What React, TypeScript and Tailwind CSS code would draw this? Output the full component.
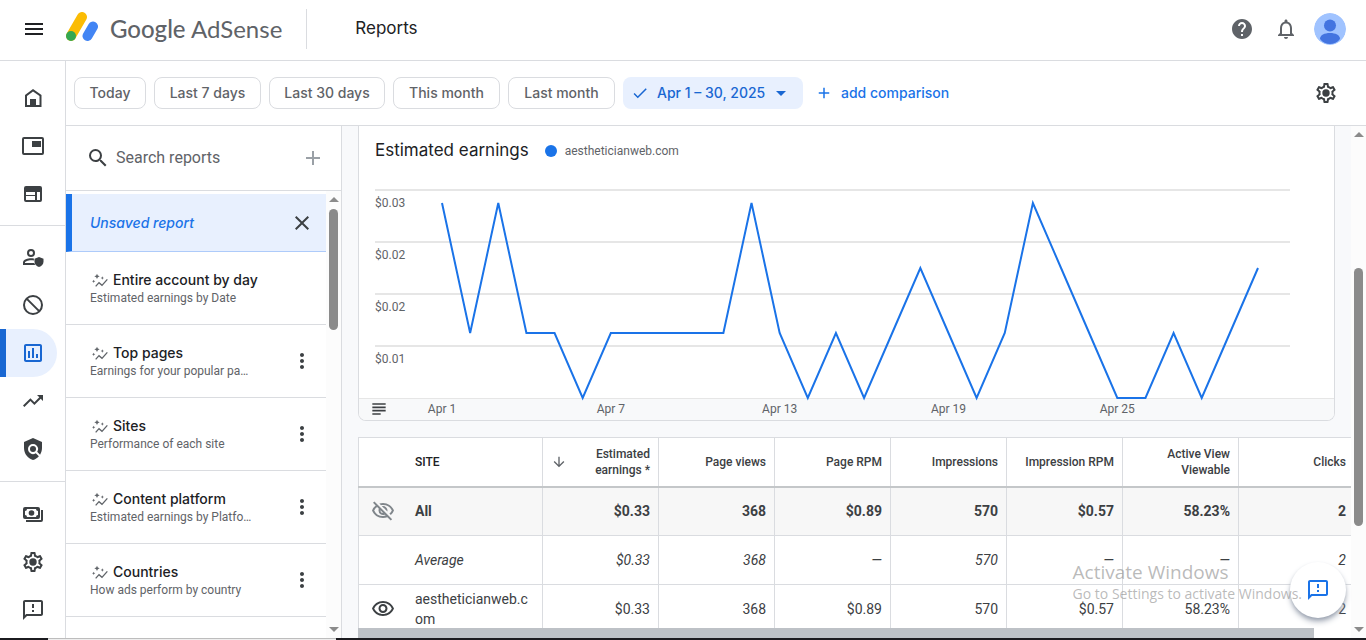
import React from 'react';
import {
  MdAdd,
  MdArrowDownward,
  MdArrowDropDown,
  MdCheck,
  MdClose,
  MdHelp,
  MdMenu,
  MdMoreVert,
  MdNotificationsNone,
  MdOutlineFeedback,
  MdOutlineInsertChart,
  MdOutlineVisibility,
  MdOutlineVisibilityOff,
  MdPolicy,
  MdSearch,
  MdSubject,
  MdTrendingUp,
} from 'react-icons/md';

const HomeIcon = () => (
  <svg viewBox="0 0 24 24" className="size-6" fill="currentColor">
    <path fillRule="evenodd" d="M4 21V9l8-6 8.5 6v12H4Zm2-2h12.5v-9L12 5.5 6 10v9Z" />
    <path d="M9 13h6v7H9z" />
  </svg>
);

const AdsIcon = () => (
  <svg viewBox="0 0 24 24" className="size-6" fill="currentColor">
    <path fillRule="evenodd" d="M3 3h18a2 2 0 0 1 2 2v14a2 2 0 0 1-2 2H3a2 2 0 0 1-2-2V5a2 2 0 0 1 2-2Zm0 2v14h18V5H3Z" />
    <path d="M11 7h9v6h-9z" />
  </svg>
);

const SitesIcon = () => (
  <svg viewBox="0 0 24 24" className="size-6" fill="currentColor">
    <path
      fillRule="evenodd"
      d="M5 4h14a2 2 0 0 1 2 2v12a2 2 0 0 1-2 2H5a2 2 0 0 1-2-2V6a2 2 0 0 1 2-2Zm0 6v3h9v-3H5Zm0 4v4h9v-4H5Zm11-4v8h3v-8h-3Z"
    />
  </svg>
);

const PrivacyIcon = () => (
  <svg viewBox="0 0 24 24" className="size-6" fill="currentColor">
    <path
      fillRule="evenodd"
      d="M10 4a4 4 0 1 1 0 8 4 4 0 0 1 0-8Zm0 2a2 2 0 1 0 0 4 2 2 0 0 0 0-4Z"
    />
    <path d="M2 20v-2.6C2 14.7 7 13.300 10 13.300c.9 0 1.900.1 2.900.3v2c-.9-.2-1.900-.3-2.900-.3-3 0-6 1.400-6 2.100V18h9.300c.2.700.5 1.400 1 2H2Z" />
    <path d="m18 12 4.500 1.800v2.900c0 2.500-1.900 4.600-4.500 5.300-2.600-.7-4.500-2.800-4.500-5.300v-2.900L18 12Z" />
  </svg>
);

const BlockIcon = () => (
  <svg viewBox="0 0 24 24" className="size-6" fill="none" stroke="currentColor" strokeWidth="2">
    <circle cx="12" cy="12" r="9" />
    <path d="m5.600 5.600 12.800 12.800" />
  </svg>
);

const PaymentsIcon = () => (
  <svg viewBox="0 0 24 24" className="size-6" fill="currentColor">
    <path
      fillRule="evenodd"
      d="M4 5h13a2 2 0 0 1 2 2v8a2 2 0 0 1-2 2H4a2 2 0 0 1-2-2V7a2 2 0 0 1 2-2Zm2 2a2 2 0 0 1-2 2v4a2 2 0 0 1 2 2h9a2 2 0 0 1 2-2V9a2 2 0 0 1-2-2H6Z"
    />
    <circle cx="10.500" cy="11" r="2.800" />
    <path d="M20 8h2v10a2 2 0 0 1-2 2H5v-2h15V8Z" />
  </svg>
);

const GearIcon = () => (
  <svg viewBox="0 0 24 24" className="size-6" fill="currentColor">
    <path d="M19.430 12.980c.04-.32.07-.64.07-.98 0-.34-.03-.66-.07-.98l2.110-1.650c.19-.15.24-.42.12-.64l-2-3.460a.5.5 0 0 0-.61-.22l-2.490 1c-.52-.4-1.080-.73-1.690-.98l-.38-2.650A.488.488 0 0 0 14 2h-4c-.25 0-.46.18-.49.42l-.38 2.650c-.61.25-1.170.59-1.690.98l-2.490-1a.5.5 0 0 0-.61.22l-2 3.460c-.13.22-.07.49.12.64l2.110 1.650c-.04.32-.07.65-.07.98 0 .33.03.66.07.98l-2.110 1.650c-.19.15-.24.42-.12.64l2 3.460c.12.220.39.300.61.220l2.490-1c.52.4 1.080.73 1.690.98l.38 2.650c.03.240.24.420.49.420h4c.25 0 .46-.18.49-.42l.38-2.650c.61-.25 1.170-.59 1.690-.98l2.490 1c.23.080.49 0 .61-.22l2-3.460a.5.5 0 0 0-.12-.64l-2.110-1.650Zm-1.980-1.710c.04.310.05.520.05.730s-.02.430-.05.730l-.14 1.130.89.700 1.080.84-.7 1.210-1.270-.51-1.040-.42-.9.680c-.43.320-.84.560-1.250.730l-1.060.430-.16 1.130-.2 1.350h-1.400l-.19-1.350-.16-1.130-1.060-.43c-.43-.18-.83-.41-1.230-.71l-.91-.7-1.060.43-1.270.51-.7-1.210 1.080-.84.89-.7-.14-1.130c-.03-.31-.05-.54-.05-.74s.02-.43.05-.73l.14-1.130-.89-.7-1.080-.84.7-1.210 1.270.51 1.040.42.9-.68c.43-.32.84-.56 1.250-.73l1.060-.43.16-1.130.2-1.350h1.390l.19 1.350.16 1.130 1.060.43c.43.180.83.410 1.230.710l.91.700 1.060-.43 1.270-.51.7 1.210-1.070.85-.89.700.14 1.120Z" />
    <circle cx="12" cy="12" r="3.700" />
  </svg>
);

const SparkLineIcon = () => (
  <svg viewBox="0 0 48 48" className="ml-0.5 size-4 text-[#5f6368]" fill="currentColor">
    <path d="m11 43 10-11 9 8 16-18" fill="none" stroke="currentColor" strokeWidth="4" />
    <path d="m15 5 2.500 5.500L23 13l-5.500 2.500L15 21l-2.500-5.500L7 13l5.500-2.500Z" />
    <path d="m31 13 1.500 3.500L36 18l-3.500 1.500L31 23l-1.500-3.500L26 18l3.500-1.500Z" />
    <path d="m5 23 1.500 3.500L10 28l-3.500 1.500L5 33l-1.500-3.500L0 28l3.500-1.500Z" />
  </svg>
);

const AdSenseLogo = () => (
  <svg viewBox="0 0 32 30" className="h-[30px] w-8">
    <path d="M16 5 5 24" stroke="#fbbc04" strokeWidth="10" strokeLinecap="round" />
    <path d="M27 14.500 21.500 24" stroke="#4285f4" strokeWidth="10" strokeLinecap="round" />
    <circle cx="5" cy="24" r="5" fill="#34a853" />
  </svg>
);

const navGroups = [
  {
    className: 'pt-[13px] pb-[7px] border-b',
    items: [
      { label: 'Home', icon: <HomeIcon /> },
      { label: 'Ads', icon: <AdsIcon /> },
      { label: 'Sites', icon: <SitesIcon /> },
    ],
  },
  {
    className: 'pt-[7px] pb-2 border-b',
    items: [
      { label: 'Privacy & messaging', icon: <PrivacyIcon /> },
      { label: 'Blocking controls', icon: <BlockIcon /> },
      { label: 'Reports', icon: <MdOutlineInsertChart className="size-6" />, active: true },
      { label: 'Optimization', icon: <MdTrendingUp className="size-6" /> },
      { label: 'Policy center', icon: <MdPolicy className="size-6" /> },
    ],
  },
  {
    className: 'pt-2',
    items: [
      { label: 'Payments', icon: <PaymentsIcon /> },
      { label: 'Account', icon: <GearIcon /> },
      { label: 'Feedback', icon: <MdOutlineFeedback className="size-6" /> },
    ],
  },
];

const ranges = [
  { label: 'Today', width: 'w-[72px]' },
  { label: 'Last 7 days', width: 'w-[107px]' },
  { label: 'Last 30 days', width: 'w-[116px]' },
  { label: 'This month', width: 'w-[107px]' },
  { label: 'Last month', width: 'w-[107px]' },
];

const reports = [
  { title: 'Entire account by day', text: 'Estimated earnings by Date', menu: false },
  { title: 'Top pages', text: 'Earnings for your popular pa…', menu: true },
  { title: 'Sites', text: 'Performance of each site', menu: true },
  { title: 'Content platform', text: 'Estimated earnings by Platfo…', menu: true },
  { title: 'Countries', text: 'How ads perform by country', menu: true },
];

const columns = ['Page views', 'Page RPM', 'Impressions', 'Impression RPM', 'Active View Viewable', 'Clicks'];

const rows = [
  {
    name: 'All',
    icon: <MdOutlineVisibilityOff className="size-6 text-[#80868b]" />,
    style: 'bg-[#f7f7f7] font-bold',
    values: ['$0.33', '368', '$0.89', '570', '$0.57', '58.23%', '2'],
  },
  {
    name: 'Average',
    icon: null,
    style: 'italic',
    values: ['$0.33', '368', '—', '570', '—', '—', '2'],
  },
  {
    name: 'aestheticianweb.com',
    icon: <MdOutlineVisibility className="size-6" />,
    style: '',
    values: ['$0.33', '368', '$0.89', '570', '$0.57', '58.23%', '2'],
  },
];

// Daily earnings in cents, April 1 to 30
const earnings = [3, 1, 3, 1, 1, 0, 1, 1, 1, 1, 1, 3, 1, 0, 1, 0, 1, 2, 1, 0, 1, 3, 2, 1, 0, 0, 1, 0, 1, 2];
const points = earnings.map((v, i) => `${83 + (i * 816) / 29},${224 - v * 65}`).join(' ');

const Header: React.FC = () => (
  <header className="flex h-[61px] shrink-0 items-center border-b border-[#dadce0] pr-5 pb-0.5 pl-[22px]">
    <button aria-label="Main menu" className="text-[#202124]">
      <MdMenu className="size-6" />
    </button>
    <a href="#home" className="ml-5 flex items-center gap-3 pb-1 text-[#5f6368]">
      <AdSenseLogo />
      <span className="pt-1 font-[Lato,sans-serif] text-2xl whitespace-nowrap">
        <span className="font-medium">Google</span> AdSense
      </span>
    </a>
    <div className="ml-6 h-10 w-px bg-[#dadce0]" />
    <h1 className="ml-12 font-[Inter,sans-serif] text-[17px] text-[#202124]">Reports</h1>
    <div className="ml-auto flex items-center gap-5 text-[#5f6368]">
      <button aria-label="Help">
        <MdHelp className="size-6" />
      </button>
      <button aria-label="Notifications">
        <MdNotificationsNone className="size-6" />
      </button>
      <button aria-label="Account" className="-ml-1">
        <svg viewBox="0 0 32 32" className="size-8 rounded-full">
          <circle cx="16" cy="16" r="16" fill="#a0c3ff" />
          <circle cx="16" cy="12.500" r="6" fill="#4374e0" />
          <path d="M6 26c0-4 4.500-6 10-6s10 2 10 6c-2.500 3.500-6 5-10 5s-7.500-1.500-10-5Z" fill="#4374e0" />
        </svg>
      </button>
    </div>
  </header>
);

const SideNav: React.FC = () => (
  <nav className="w-[66px] shrink-0 border-r border-[#dadce0] text-[#3c4043]">
    {navGroups.map((group, i) => (
      <div key={i} className={`border-[#dadce0] ${group.className}`}>
        {group.items.map((item) => (
          <button
            key={item.label}
            aria-label={item.label}
            className={`flex h-12 w-[57px] items-center ${
              'active' in item
                ? 'rounded-r-full border-l-[6px] border-[#1967d2] bg-[#e8f0fe] pl-[15px] text-[#1967d2]'
                : 'pl-[21px]'
            }`}
          >
            {item.icon}
          </button>
        ))}
      </div>
    ))}
  </nav>
);

const DateBar: React.FC = () => (
  <div className="flex h-[65px] shrink-0 items-center gap-2 border-b border-[#dadce0] pr-7 pl-2 font-[Inter,sans-serif] text-sm font-medium whitespace-nowrap">
    {ranges.map((range) => (
      <button
        key={range.label}
        className={`h-8 rounded-lg border border-[#dadce0] text-[#5f6368] ${range.width}`}
      >
        {range.label}
      </button>
    ))}
    <button className="flex h-8 w-[180px] items-center rounded-lg bg-[#e8f0fe] pl-2 text-[#1967d2]">
      <MdCheck className="size-[18px]" />
      <span className="ml-2">Apr 1 – 30, 2025</span>
      <MdArrowDropDown className="ml-1 size-6" />
    </button>
    <button className="ml-1 flex items-center gap-2 text-[#1a73e8]">
      <MdAdd className="size-[18px]" />
      add comparison
    </button>
    <button aria-label="Report settings" className="ml-auto text-[#3c4043]">
      <GearIcon />
    </button>
  </div>
);

const ReportList: React.FC = () => (
  <section className="flex w-[276px] shrink-0 flex-col border-r border-[#dadce0]">
    <div className="flex h-[65px] shrink-0 items-center border-b border-[#dadce0] pr-4 pl-5">
      <MdSearch className="size-6 text-[#3c4043]" />
      <input
        aria-label="Search reports"
        placeholder="Search reports"
        className="w-0 flex-1 pl-1.5 text-base outline-none placeholder:text-[#5f6368]"
      />
      <button aria-label="New report" className="text-[#9aa0a6]">
        <MdAdd className="size-6" />
      </button>
    </div>
    <div className="flex min-h-0 flex-1">
      <div className="flex-1 overflow-hidden pt-[3px]">
        <div className="flex h-[58px] items-center justify-between border-b border-l-[6px] border-b-[#aecbfa] border-l-[#1a73e8] bg-[#e8f0fe] pr-3 pl-[18px]">
          <span className="font-[Inter,sans-serif] text-sm font-medium text-[#1a73e8] italic">Unsaved report</span>
          <button aria-label="Close report" className="text-[#3c4043]">
            <MdClose className="size-6" />
          </button>
        </div>
        {reports.map((report) => (
          <div key={report.title} className="flex h-[73px] items-center border-b border-[#dadce0] pr-3 pl-6">
            <a href="#report" className="flex-1 whitespace-nowrap">
              <div className="flex h-5 items-center gap-[5px] font-[Inter,sans-serif] text-sm font-medium text-[#202124]">
                <SparkLineIcon />
                {report.title}
              </div>
              <p className="text-xs leading-4 text-[#5f6368]">{report.text}</p>
            </a>
            {report.menu && (
              <button aria-label={`More actions for ${report.title}`} className="text-[#3c4043]">
                <MdMoreVert className="size-6" />
              </button>
            )}
          </div>
        ))}
      </div>
      <div className="flex w-[15px] flex-col items-center justify-between bg-[#fcfcfc] py-1.5">
        <div className="border-x-[5px] border-b-[5px] border-x-transparent border-b-[#8b8b8b]" />
        <div className="mt-[7px] mb-auto h-[121px] w-[9px] rounded-full bg-[#8b8b8b]" />
        <div className="border-x-[5px] border-t-[5px] border-x-transparent border-t-[#8b8b8b]" />
      </div>
    </div>
  </section>
);

const EarningsChart: React.FC = () => (
  <div className="relative mr-4 overflow-hidden rounded-b-lg border border-t-0 border-[#dadce0] bg-white">
    <div className="flex h-12 items-center pt-0.5 pl-4">
      <h2 className="font-[Inter,sans-serif] text-[17px] text-[#202124]">Estimated earnings</h2>
      <span className="ml-4 size-3 rounded-full bg-[#1a73e8]" />
      <span className="ml-2 text-xs text-[#5f6368]">aestheticianweb.com</span>
    </div>
    <svg viewBox="0 0 975 246" className="block w-full">
      <rect y="224" width="975" height="22" fill="#f8f9fa" />
      <g fill="#e6e6e6">
        {[15, 67, 119, 171].map((y) => (
          <rect key={y} x="16" y={y} width="915" height="2" />
        ))}
        <rect y="224" width="975" height="1" />
      </g>
      <g fontFamily="Roboto, sans-serif" fontSize="12" fill="#5f6368">
        {['$0.03', '$0.02', '$0.02', '$0.01'].map((label, i) => (
          <text key={i} x="16" y={33 + i * 52}>
            {label}
          </text>
        ))}
        {['Apr 1', 'Apr 7', 'Apr 13', 'Apr 19', 'Apr 25'].map((label, i) => (
          <text key={label} x={83 + (i * 6 * 816) / 29} y="239" textAnchor="middle">
            {label}
          </text>
        ))}
      </g>
      <polyline points={points} fill="none" stroke="#1a73e8" strokeWidth="2" />
    </svg>
    <button aria-label="Chart annotations" className="absolute bottom-px left-2.5 text-[#3c4043]">
      <MdSubject className="size-5" />
    </button>
  </div>
);

const EarningsTable: React.FC = () => (
  <div className="mt-4 overflow-hidden">
    <table className="w-full min-w-[997px] table-fixed border-collapse border border-[#dadce0] bg-white text-[#3c4043]">
      <thead>
        <tr className="h-[49px] border-b-2 border-[#c4c7c9] text-xs leading-4">
          <th className="w-[184px] pl-14 text-left font-medium text-[#202124]">SITE</th>
          <th className="border-l border-[#dadce0] px-2 font-medium">
            <button className="flex w-full items-center justify-between text-right">
              <MdArrowDownward className="size-4 text-[#5f6368]" />
              <span className="w-16">Estimated earnings *</span>
            </button>
          </th>
          {columns.map((column) => (
            <th key={column} className="border-l border-[#dadce0] px-2 text-right font-medium">
              {column}
            </th>
          ))}
        </tr>
      </thead>
      <tbody>
        {rows.map((row) => (
          <tr key={row.name} className={`h-[49px] border-b border-[#dadce0] text-sm ${row.style}`}>
            <td className="p-0">
              <div className="flex items-center gap-5 pl-3">
                <span className="size-6 shrink-0">{row.icon}</span>
                <span className="w-[120px] break-all">{row.name}</span>
              </div>
            </td>
            {row.values.map((value, i) => (
              <td key={i} className="border-l border-[#dadce0] px-2 text-right">
                {value}
              </td>
            ))}
          </tr>
        ))}
      </tbody>
    </table>
  </div>
);

export default function App() {
  return (
    <div className="relative flex h-screen flex-col overflow-hidden bg-white font-[Roboto,sans-serif]">
      <Header />
      <div className="flex min-h-0 flex-1">
        <SideNav />
        <div className="flex min-w-0 flex-1 flex-col">
          <DateBar />
          <div className="flex min-h-0 flex-1">
            <ReportList />
            <main className="relative min-w-0 flex-1 overflow-hidden bg-[#f8f9fb] pl-4">
              <EarningsChart />
              <EarningsTable />
              <div className="absolute right-0 bottom-0 left-4 h-2.5 bg-white">
                <div className="mr-[37px] h-full bg-[#bdc1c6]" />
              </div>
            </main>
            <div className="flex w-[15px] shrink-0 flex-col items-center bg-[#fcfcfc] py-1.5">
              <div className="border-x-[5px] border-b-[5px] border-x-transparent border-b-[#8b8b8b]" />
              <div className="mt-[131px] h-[258px] w-[9px] rounded-full bg-[#8b8b8b]" />
              <div className="mt-auto border-x-[5px] border-t-[5px] border-x-transparent border-t-[#8b8b8b]" />
            </div>
          </div>
        </div>
      </div>
      <div className="flex h-0.5 shrink-0 bg-[#1b1b1f]">
        <div className="w-12" />
        <div className="w-72 border-t border-[#bdbdbd] bg-[#eeeeee]" />
      </div>
      <button
        aria-label="Send feedback"
        className="absolute right-5 bottom-[22px] flex size-14 items-center justify-center rounded-full bg-white text-[#1a73e8] shadow-md shadow-gray-400"
      >
        <MdOutlineFeedback className="size-6" />
      </button>
      <div className="pointer-events-none absolute right-16 bottom-9 font-['Open_Sans',sans-serif] whitespace-nowrap text-[#8c8c8c]/60">
        <p className="text-[19px] leading-6">Activate Windows</p>
        <p className="text-sm leading-5">Go to Settings to activate Windows.</p>
      </div>
    </div>
  );
}
